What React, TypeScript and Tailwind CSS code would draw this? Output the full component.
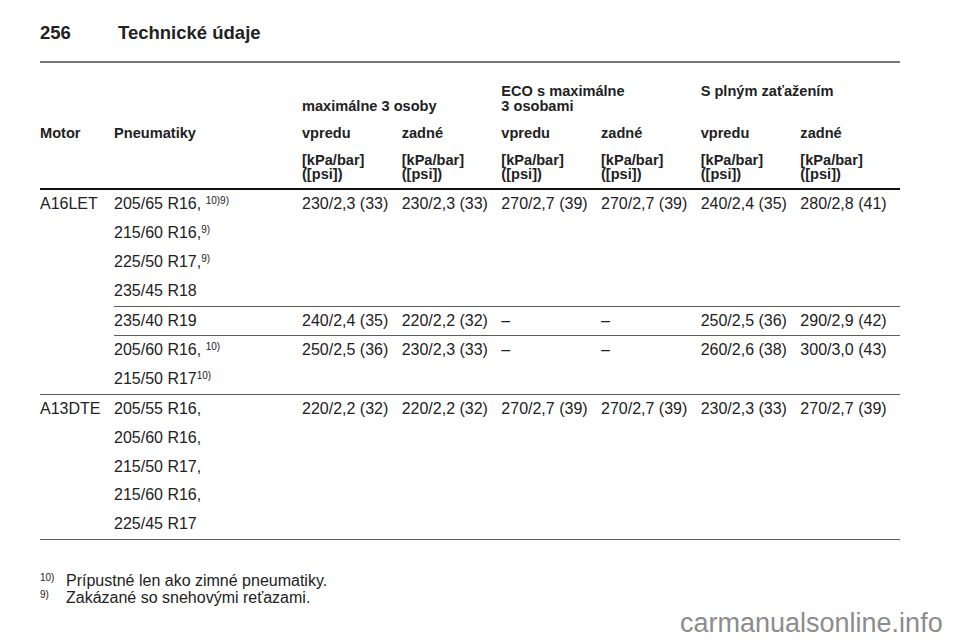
const FONT = { fontFamily: '"Liberation Sans", Arial, sans-serif' };

const SUB_GRID = "grid grid-cols-[188px_repeat(6,minmax(0,1fr))]";
const HEAD_GRID = "grid grid-cols-[74px_188px_repeat(6,minmax(0,1fr))]";

type Tire = { size: string; note?: string; gap?: boolean };

type SubRow = {
  tires: Tire[];
  values: string[];
};

type Engine = {
  motor: string;
  rows: SubRow[];
};

const DASH = "–";

const engines: Engine[] = [
  {
    motor: "A16LET",
    rows: [
      {
        tires: [
          { size: "205/65 R16,", note: "10)9)", gap: true },
          { size: "215/60 R16,", note: "9)" },
          { size: "225/50 R17,", note: "9)" },
          { size: "235/45 R18" },
        ],
        values: ["230/2,3 (33)", "230/2,3 (33)", "270/2,7 (39)", "270/2,7 (39)", "240/2,4 (35)", "280/2,8 (41)"],
      },
      {
        tires: [{ size: "235/40 R19" }],
        values: ["240/2,4 (35)", "220/2,2 (32)", DASH, DASH, "250/2,5 (36)", "290/2,9 (42)"],
      },
      {
        tires: [
          { size: "205/60 R16,", note: "10)", gap: true },
          { size: "215/50 R17", note: "10)" },
        ],
        values: ["250/2,5 (36)", "230/2,3 (33)", DASH, DASH, "260/2,6 (38)", "300/3,0 (43)"],
      },
    ],
  },
  {
    motor: "A13DTE",
    rows: [
      {
        tires: [
          { size: "205/55 R16," },
          { size: "205/60 R16," },
          { size: "215/50 R17," },
          { size: "215/60 R16," },
          { size: "225/45 R17" },
        ],
        values: ["220/2,2 (32)", "220/2,2 (32)", "270/2,7 (39)", "270/2,7 (39)", "230/2,3 (33)", "270/2,7 (39)"],
      },
    ],
  },
];

const axles = ["vpredu", "zadné", "vpredu", "zadné", "vpredu", "zadné"];

function Sup({ children }: { children: string }) {
  return <sup className="text-[10px] leading-none">{children}</sup>;
}

function Header() {
  return (
    <div className="pt-[21.5px] pb-[6px] text-[14.6px] font-bold leading-[14.5px]">
      {/* load groups */}
      <div className={HEAD_GRID}>
        <div className="col-start-3 col-span-2 flex h-[29px] items-end whitespace-nowrap">maximálne 3 osoby</div>
        <div className="col-span-2 h-[29px]">
          ECO s maximálne
          <br />3 osobami
        </div>
        <div className="col-span-2 h-[29px]">S plným zaťažením</div>
      </div>

      <div className={`mt-[13.4px] ${HEAD_GRID}`}>
        <div>Motor</div>
        <div>Pneumatiky</div>
        {axles.map((a, i) => (
          <div key={i}>{a}</div>
        ))}
      </div>

      <div className={`mt-[12.1px] ${HEAD_GRID}`}>
        {axles.map((_, i) => (
          <div key={i} className={i === 0 ? "col-start-3" : ""}>
            [kPa/bar]
            <br />
            ([psi])
          </div>
        ))}
      </div>
    </div>
  );
}

function EngineBlock({ engine }: { engine: Engine }) {
  return (
    <div className="flex border-b border-[#5e5e5e] leading-[28.8px]">
      <div className="w-[74px] shrink-0">{engine.motor}</div>
      <div className="flex flex-1 flex-col">
        {engine.rows.map((row, ri) => (
          <div
            key={ri}
            className={`${SUB_GRID} ${ri < engine.rows.length - 1 ? "border-b border-[#5e5e5e]" : ""}`}
          >
            <div>
              {row.tires.map((t, ti) => (
                <div key={ti} className="whitespace-nowrap">
                  {t.size}
                  {t.note && (
                    <>
                      {t.gap && " "}
                      <Sup>{t.note}</Sup>
                    </>
                  )}
                </div>
              ))}
            </div>
            {row.values.map((v, vi) => (
              <div key={vi} className="whitespace-nowrap">
                {v}
              </div>
            ))}
          </div>
        ))}
      </div>
    </div>
  );
}

export default function App() {
  return (
    <div
      className="relative h-[642px] w-[960px] overflow-hidden bg-white pl-[40px] pr-[60px] text-[16px] text-[#222]"
      style={FONT}
    >
      <div className="flex pt-[21px] text-[18.5px] font-bold leading-[24px]">
        <span className="w-[78px]">256</span>
        <span>Technické údaje</span>
      </div>
      <div className="mt-[16px] h-[1.5px] bg-[#777]" />

      <Header />
      <div className="h-[2.5px] bg-[#111]" />

      {engines.map((e) => (
        <EngineBlock key={e.motor} engine={e} />
      ))}

      <div className="mt-[32.3px] leading-[17px]">
        <div className="flex">
          <span className="w-[26px]">
            <Sup>10)</Sup>
          </span>
          <span>Prípustné len ako zimné pneumatiky.</span>
        </div>
        <div className="flex">
          <span className="w-[26px]">
            <Sup>9)</Sup>
          </span>
          <span>Zakázané so snehovými reťazami.</span>
        </div>
      </div>

      <div className="absolute left-[680px] top-[610px] text-[27px] leading-none text-[#8c8c8c]">
        carmanualsonline.info
      </div>
    </div>
  );
}
